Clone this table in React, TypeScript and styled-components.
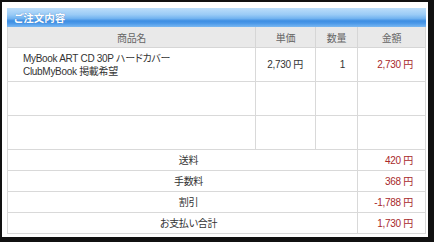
import React from 'react';
import styled, { createGlobalStyle } from 'styled-components';

interface OrderItem {
  name: string[];
  price: string;
  qty: string;
  amount: string;
}

interface SummaryRow {
  label: string;
  value: string;
}

const items: OrderItem[] = [
  {
    name: ['MyBook ART CD 30P ハードカバー', 'ClubMyBook 掲載希望'],
    price: '2,730 円',
    qty: '1',
    amount: '2,730 円',
  },
];

const summary: SummaryRow[] = [
  { label: '送料', value: '420 円' },
  { label: '手数料', value: '368 円' },
  { label: '割引', value: '-1,788 円' },
  { label: 'お支払い合計', value: '1,730 円' },
];

const GlobalStyle = createGlobalStyle`
  html, body {
    margin: 0;
    padding: 0;
    background: #000;
  }
  body {
    font-family: "Liberation Sans", "Noto Sans CJK JP", sans-serif;
    font-feature-settings: "palt";
  }
`;

const Frame = styled.div`
  box-sizing: border-box;
  width: 434px;
  height: 242px;
  border-style: solid;
  border-color: #111;
  border-width: 2px 6px 5px 2px;
  background: #fff;
  padding: 6px 0 0 5px;
`;

const Panel = styled.section`
  width: 419px;
`;

const TitleBar = styled.h2`
  margin: 0;
  height: 19px;
  padding-left: 7px;
  display: flex;
  align-items: center;
  font-size: 10.5px;
  font-weight: bold;
  color: #fff;
  text-shadow: 0 0 1px #2a6fbf;
  background: linear-gradient(
    to bottom,
    #bddefa 0%,
    #9acbf6 35%,
    #72b3f0 55%,
    #3e8ee3 68%,
    #4a98e8 80%,
    #7ab8f2 100%
  );
`;

const Table = styled.table`
  width: 419px;
  table-layout: fixed;
  border-collapse: collapse;
  font-size: 10px;
  letter-spacing: -0.3px;
  color: #333;
`;

const HeadCell = styled.th<{ $w?: number }>`
  width: ${(p) => (p.$w ? `${p.$w}px` : 'auto')};
  height: 20px;
  padding: 0;
  background: #e9e9e9;
  border: 1px solid #d6d6d6;
  border-top: none;
  font-weight: normal;
  color: #666;
  text-align: center;
`;

const Cell = styled.td<{ $align?: 'left' | 'right' | 'center'; $red?: boolean; $tall?: boolean }>`
  height: ${(p) => (p.$tall ? '33px' : '20px')};
  padding: ${(p) => (p.$align === 'left' ? '0 0 0 15px' : p.$align === 'center' ? '0 0 0 12px' : '0 12px 0 0')};
  border: 1px solid #d9d9d9;
  text-align: ${(p) => p.$align || 'right'};
  color: ${(p) => (p.$red ? '#a8292b' : '#333')};
  line-height: 13px;
  vertical-align: middle;
  white-space: nowrap;
`;

const App: React.FC = () => {
  const emptyRows = 2;

  return (
    <>
      <GlobalStyle />
      <Frame>
        <Panel>
          <TitleBar>ご注文内容</TitleBar>
          <Table>
            <thead>
              <tr>
                <HeadCell>商品名</HeadCell>
                <HeadCell $w={59}>単価</HeadCell>
                <HeadCell $w={41}>数量</HeadCell>
                <HeadCell $w={67}>金額</HeadCell>
              </tr>
            </thead>
            <tbody>
              {items.map((item, i) => (
                <tr key={i}>
                  <Cell $align="left" $tall>
                    {item.name.map((line, j) => (
                      <div key={j}>{line}</div>
                    ))}
                  </Cell>
                  <Cell $tall>{item.price}</Cell>
                  <Cell $tall>{item.qty}</Cell>
                  <Cell $tall $red>{item.amount}</Cell>
                </tr>
              ))}
              {Array.from({ length: emptyRows }).map((_, i) => (
                <tr key={`empty-${i}`}>
                  <Cell $tall />
                  <Cell $tall />
                  <Cell $tall />
                  <Cell $tall />
                </tr>
              ))}
              {summary.map((row) => (
                <tr key={row.label}>
                  <Cell colSpan={3} $align="center">{row.label}</Cell>
                  <Cell $red>{row.value}</Cell>
                </tr>
              ))}
            </tbody>
          </Table>
        </Panel>
      </Frame>
    </>
  );
};

export default App;
